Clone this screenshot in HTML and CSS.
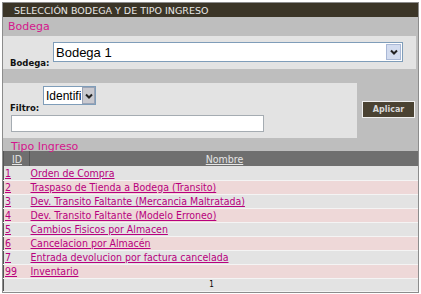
FILE: index.html
```html
<!DOCTYPE html>
<html lang="es">
<head>
    <meta charset="UTF-8">
    <title>Selección Bodega</title>
    <link rel="stylesheet" href="styles.css">
</head>
<body>
    <div class="marco">
        <div class="titulo">SELECCIÓN BODEGA Y DE TIPO INGRESO</div>
        <div class="seccion">Bodega</div>
        <div class="caja">
            <label class="etiqueta">Bodega:</label>
            <span class="combo">
                <select class="selBodega"><option>Bodega 1</option></select>
                <span class="flecha"><svg width="8" height="6" viewBox="0 0 8 6"><path d="M1 1.5 L4 4.5 L7 1.5" fill="none" stroke="#222" stroke-width="2"/></svg></span>
            </span>
        </div>
        <div class="hueco"></div>
        <div class="filaFiltro">
            <div class="cajaFiltro">
                <div class="lineaFiltro">
                    <label class="etiqueta">Filtro:</label>
                    <span class="combo">
                        <select class="selFiltro"><option>Identificador</option></select>
                        <span class="flecha flechaGris"><svg width="8" height="6" viewBox="0 0 8 6"><path d="M1 1.5 L4 4.5 L7 1.5" fill="none" stroke="#222" stroke-width="2"/></svg></span>
                    </span>
                </div>
                <input type="text" class="txtFiltro">
            </div>
            <div class="zonaBoton"><button class="btnAplicar">Aplicar</button></div>
        </div>
        <div class="seccion seccion2">Tipo Ingreso</div>
        <table class="grid">
            <tr class="cab"><th class="colId"><a>ID</a></th><th><a>Nombre</a></th></tr>
            <tr class="par"><td><a href="#">1</a></td><td><a href="#">Orden de Compra</a></td></tr>
            <tr class="non"><td><a href="#">2</a></td><td><a href="#">Traspaso de Tienda a Bodega (Transito)</a></td></tr>
            <tr class="par"><td><a href="#">3</a></td><td><a href="#">Dev. Transito Faltante (Mercancia Maltratada)</a></td></tr>
            <tr class="non"><td><a href="#">4</a></td><td><a href="#">Dev. Transito Faltante (Modelo Erroneo)</a></td></tr>
            <tr class="par"><td><a href="#">5</a></td><td><a href="#">Cambios Fisicos por Almacen</a></td></tr>
            <tr class="non"><td><a href="#">6</a></td><td><a href="#">Cancelacion por Almacén</a></td></tr>
            <tr class="par"><td><a href="#">7</a></td><td><a href="#">Entrada devolucion por factura cancelada</a></td></tr>
            <tr class="non"><td><a href="#">99</a></td><td><a href="#">Inventario</a></td></tr>
            <tr class="pie"><td colspan="2">1</td></tr>
        </table>
    </div>
</body>
</html>
```

FILE: styles.css
```css
* { box-sizing: border-box }
body { margin: 0; background: #fff; font-family: "DejaVu Sans", Verdana, sans-serif; }
.marco { margin: 2px; width: 417px; background: #bebebe; border: 1px solid #8c8c8c; }
.titulo { height: 14px; background: #3b3527; color: #e8e8e8; font-size: 9.5px; line-height: 15px; padding-left: 11px; }
.seccion { height: 18px; color: #d4168c; font-size: 11px; line-height: 20px; padding-left: 5px; }
.caja { height: 33px; background: #e3e3e3; margin-right: 2px; margin-top: 1px; display: flex; align-items: flex-start; padding: 6px 0 0 7px; }
.etiqueta { font-size: 8.5px; font-weight: bold; color: #111; }
.caja .etiqueta { margin-top: 16px; width: 43px; }
.combo { position: relative; display: inline-block; }
.flecha { position: absolute; right: 2px; top: 2px; bottom: 2px; width: 15px; background: #d3dcef; border: 1px solid #a9b8d6; display: flex; align-items: center; justify-content: center; pointer-events: none; }
.flechaGris { background: #c9c9cf; border-color: #9aa3b5; right: 1px; top: 1px; bottom: 1px; width: 13px; }
select { appearance: none; -webkit-appearance: none; }
.selBodega { display: block; width: 350px; height: 20px; font: 13px "Liberation Sans", Arial, sans-serif; border: 1px solid #7f9db9; background: #fff; padding: 0 2px; }
.hueco { height: 14px; }
.filaFiltro { display: flex; height: 55px; }
.cajaFiltro { width: 354px; background: #e3e3e3; padding: 3px 0 0 7px; }
.lineaFiltro { display: flex; align-items: flex-end; height: 28px; }
.lineaFiltro .etiqueta { width: 33px; margin-bottom: 1px; }
.lineaFiltro .combo { margin-bottom: 9px; }
.selFiltro { display: block; width: 53px; height: 19px; font: 12px "Liberation Sans", Arial, sans-serif; border: 1px solid #7f9db9; background: #fff; padding: 0 14px 0 2px; }
.txtFiltro { display: block; margin: 1px 0 0 1px; width: 253px; height: 17px; border: 1px solid #a5acb2; background: #fff; }
.zonaBoton { flex: 1; padding: 14px 0 0 5px; }
.btnAplicar { width: 53px; height: 17px; background: #4a4232; color: #d8d8d8; border: 1px solid #f0f0f0; font: bold 8px "DejaVu Sans", Verdana, sans-serif; padding: 0; }
.seccion2 { height: 13px; line-height: 17px; padding-left: 8px; }
.grid { width: 100%; border-collapse: collapse; font-family: "DejaVu Sans Condensed", "DejaVu Sans", sans-serif; font-stretch: condensed; font-size: 10.5px; border-left: 1px solid #555; }
.grid td, .grid th { height: 14px; padding: 0 0 0 1px; border-bottom: 1px solid #f4f4f4; white-space: nowrap; }
.grid a { color: #b8007d; }
.cab th { height: 15px; background: #6f6f6f; font-weight: normal; text-align: center; border-bottom: 0; }
.cab th a { color: #e6e6e6; text-decoration: underline; }
.colId { width: 26px; border-right: 1px solid #555; }
.grid td:first-child { width: 26px; }
.par td { background: #e3e3e3; }
.non td { background: #eed8d8; }
.pie td { background: #e3e3e3; text-align: center; font-size: 8px; color: #000; height: 13px; }
```
